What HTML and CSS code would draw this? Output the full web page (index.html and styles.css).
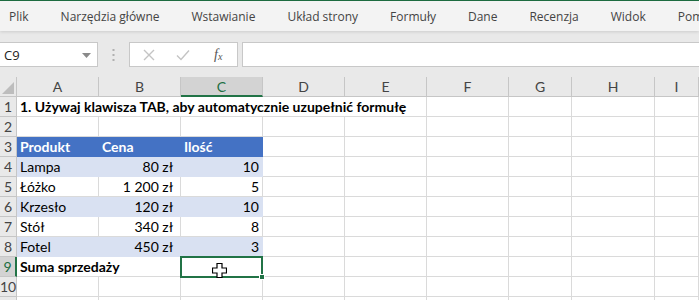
FILE: index.html
```html
<!DOCTYPE html>
<html lang="pl">
<head>
<meta charset="utf-8">
<title>Excel</title>
<link rel="stylesheet" href="styles.css">
</head>
<body>
<div class="app">
  <div class="ribbon">
    <span class="tab">Plik</span>
    <span class="tab">Narzędzia główne</span>
    <span class="tab">Wstawianie</span>
    <span class="tab">Układ strony</span>
    <span class="tab">Formuły</span>
    <span class="tab">Dane</span>
    <span class="tab">Recenzja</span>
    <span class="tab">Widok</span>
    <span class="tab last">Pom</span>
  </div>
  <div class="fbar">
    <div class="namebox">
      <span class="nb-text">C9</span>
      <svg class="dd" width="9" height="5" viewBox="0 0 9 5"><path d="M0 0H9L4.5 5Z" fill="#8a8a8a"/></svg>
    </div>
    <div class="dots">
      <svg width="3" height="12" viewBox="0 0 3 12"><rect x="0.5" y="0" width="2" height="2" fill="#b0b0b0"/><rect x="0.5" y="5" width="2" height="2" fill="#b0b0b0"/><rect x="0.5" y="10" width="2" height="2" fill="#b0b0b0"/></svg>
    </div>
    <div class="fbtns">
      <svg class="ic" width="12" height="12" viewBox="0 0 12 12"><path d="M1 1L11 11M11 1L1 11" stroke="#c4c4c4" stroke-width="1.4" fill="none"/></svg>
      <svg class="ic" width="14" height="12" viewBox="0 0 14 12"><path d="M1 6.5L5 10.5L13 1.5" stroke="#c4c4c4" stroke-width="1.4" fill="none"/></svg>
      <span class="fx">f<sub>x</sub></span>
    </div>
    <div class="finput"></div>
  </div>
  <div class="sheet">
    <div class="ch corner"><svg width="12" height="12" viewBox="0 0 12 12"><path d="M12 0V12H0Z" fill="#bdbdbd"/></svg></div>
    <div class="ch">A</div>
    <div class="ch">B</div>
    <div class="ch selc">C</div>
    <div class="ch">D</div>
    <div class="ch">E</div>
    <div class="ch">F</div>
    <div class="ch">G</div>
    <div class="ch">H</div>
    <div class="ch">I</div>

    <div class="rh">1</div>
    <div class="c b span5">1. Używaj klawisza TAB, aby automatycznie uzupełnić formułę</div>
    <div class="c"></div><div class="c"></div><div class="c"></div><div class="c"></div>

    <div class="rh">2</div>
    <div class="c"></div><div class="c"></div><div class="c"></div><div class="c"></div><div class="c"></div><div class="c"></div><div class="c"></div><div class="c"></div><div class="c"></div>

    <div class="rh">3</div>
    <div class="c th">Produkt</div><div class="c th">Cena</div><div class="c th">Ilość</div>
    <div class="c"></div><div class="c"></div><div class="c"></div><div class="c"></div><div class="c"></div><div class="c"></div>

    <div class="rh">4</div>
    <div class="c band">Lampa</div><div class="c band num pr">80 zł</div><div class="c band num">10</div>
    <div class="c"></div><div class="c"></div><div class="c"></div><div class="c"></div><div class="c"></div><div class="c"></div>

    <div class="rh">5</div>
    <div class="c">Łóżko</div><div class="c num pr">1 200 zł</div><div class="c num">5</div>
    <div class="c"></div><div class="c"></div><div class="c"></div><div class="c"></div><div class="c"></div><div class="c"></div>

    <div class="rh">6</div>
    <div class="c band">Krzesło</div><div class="c band num pr">120 zł</div><div class="c band num">10</div>
    <div class="c"></div><div class="c"></div><div class="c"></div><div class="c"></div><div class="c"></div><div class="c"></div>

    <div class="rh">7</div>
    <div class="c">Stół</div><div class="c num pr">340 zł</div><div class="c num">8</div>
    <div class="c"></div><div class="c"></div><div class="c"></div><div class="c"></div><div class="c"></div><div class="c"></div>

    <div class="rh">8</div>
    <div class="c band">Fotel</div><div class="c band num pr">450 zł</div><div class="c band num">3</div>
    <div class="c"></div><div class="c"></div><div class="c"></div><div class="c"></div><div class="c"></div><div class="c"></div>

    <div class="rh selr">9</div>
    <div class="c b span2">Suma sprzedaży</div>
    <div class="c active">
      <div class="selbox"></div>
      <div class="handle"></div>
      <svg class="cursor" width="15" height="15" viewBox="0 0 15 15"><path d="M5 0.5H10V5H14.5V10H10V14.5H5V10H0.5V5H5Z" fill="#fff" stroke="#000" stroke-width="1.2"/></svg>
    </div>
    <div class="c"></div><div class="c"></div><div class="c"></div><div class="c"></div><div class="c"></div><div class="c"></div>

    <div class="rh">10</div>
    <div class="c"></div><div class="c"></div><div class="c"></div><div class="c"></div><div class="c"></div><div class="c"></div><div class="c"></div><div class="c"></div><div class="c"></div>

    <div class="rh"></div>
    <div class="c"></div><div class="c"></div><div class="c"></div><div class="c"></div><div class="c"></div><div class="c"></div><div class="c"></div><div class="c"></div><div class="c"></div>
  </div>
</div>
</body>
</html>
```

FILE: styles.css
```css
* { box-sizing: border-box; }
html, body { margin: 0; padding: 0; }
body {
  width: 699px;
  height: 300px;
  overflow: hidden;
  background: #e8e8e8;
  font-family: "Lato", "Liberation Sans", sans-serif;
}
.app { width: 699px; height: 300px; overflow: hidden; }

.ribbon {
  height: 31px;
  background: #f3f3f3;
  border-top: 1px solid #1d6b40;
  display: flex;
  align-items: center;
  gap: 32px;
  padding-left: 9px;
  white-space: nowrap;
  font-family: "Open Sans", "Noto Sans", sans-serif;
  font-size: 12px;
  color: #444;
  box-shadow: 0 1px 3px rgba(0, 0, 0, 0.12);
  position: relative;
  z-index: 2;
}
.tab { flex: none; }

.fbar {
  height: 46px;
  display: flex;
  align-items: flex-start;
  padding-top: 11px;
  background: #e9e9e9;
}
.namebox {
  width: 98px;
  height: 25px;
  background: #fff;
  border: 1px solid #c8c8c8;
  border-left: none;
  display: flex;
  align-items: center;
  justify-content: space-between;
  padding: 0 6px 0 4px;
  font-family: "Open Sans", "Noto Sans", sans-serif;
  font-size: 13px;
  color: #222;
}
.dd { margin-top: 1px; }
.dots {
  width: 31px;
  height: 25px;
  display: flex;
  align-items: center;
  justify-content: center;
}
.fbtns {
  width: 109px;
  height: 25px;
  background: #fff;
  border: 1px solid #c8c8c8;
  display: flex;
  align-items: center;
  padding-left: 13px;
  gap: 0;
}
.fbtns .ic:nth-child(1) { margin-right: 21px; }
.fbtns .ic:nth-child(2) { margin-right: 24px; }
.fx {
  font-family: "Liberation Serif", serif;
  font-style: italic;
  font-size: 14px;
  color: #555;
  line-height: 1;
}
.fx sub { font-size: 10px; vertical-align: -1px; }
.finput {
  flex: 1;
  height: 25px;
  margin-left: 4px;
  background: #fff;
  border: 1px solid #c8c8c8;
  border-right: none;
}

.sheet {
  display: grid;
  grid-template-columns: 17px 82px 82px 82px 82px 82px 82px 63px 83px 44px;
  grid-auto-rows: 20px;
  background: #fff;
  font-size: 14px;
  color: #000;
}
.ch {
  background: #e9e9e9;
  border-right: 1px solid #c6c6c6;
  border-bottom: 1px solid #c6c6c6;
  display: flex;
  align-items: center;
  justify-content: center;
  color: #444;
  font-size: 14px;
}
.corner { justify-content: flex-end; align-items: flex-end; padding: 0 2px 2px 0; }
.selc { background: #d3d3d3; border-bottom: 2px solid #217346; color: #216e42; }
.rh {
  background: #e9e9e9;
  border-right: 1px solid #c6c6c6;
  border-bottom: 1px solid #c6c6c6;
  display: flex;
  align-items: center;
  justify-content: center;
  color: #444;
  font-size: 14px;
}
.selr { background: #d3d3d3; border-right: 2px solid #217346; color: #216e42; }
.c {
  border-right: 1px solid #dadada;
  border-bottom: 1px solid #dadada;
  padding: 0 3px;
  line-height: 19px;
  white-space: nowrap;
  overflow: visible;
}
.b { font-weight: 700; }
.span5 { grid-column: span 5; }
.span2 { grid-column: span 2; }
.th {
  background: #4472c4;
  border-color: #4472c4;
  color: #fff;
  font-weight: 700;
}
.band { background: #d9e1f2; border-color: #d9e1f2; }
.num { text-align: right; }
.pr { padding-right: 7px; }
.active { position: relative; }
.selbox {
  position: absolute;
  left: -1px;
  top: -1px;
  right: -1px;
  bottom: -2px;
  border: 2px solid #217346;
}
.handle {
  position: absolute;
  width: 6px;
  height: 6px;
  right: -3px;
  bottom: -4px;
  background: #217346;
  border: 1px solid #fff;
}
.cursor {
  position: absolute;
  left: 31px;
  top: 6px;
}
```
